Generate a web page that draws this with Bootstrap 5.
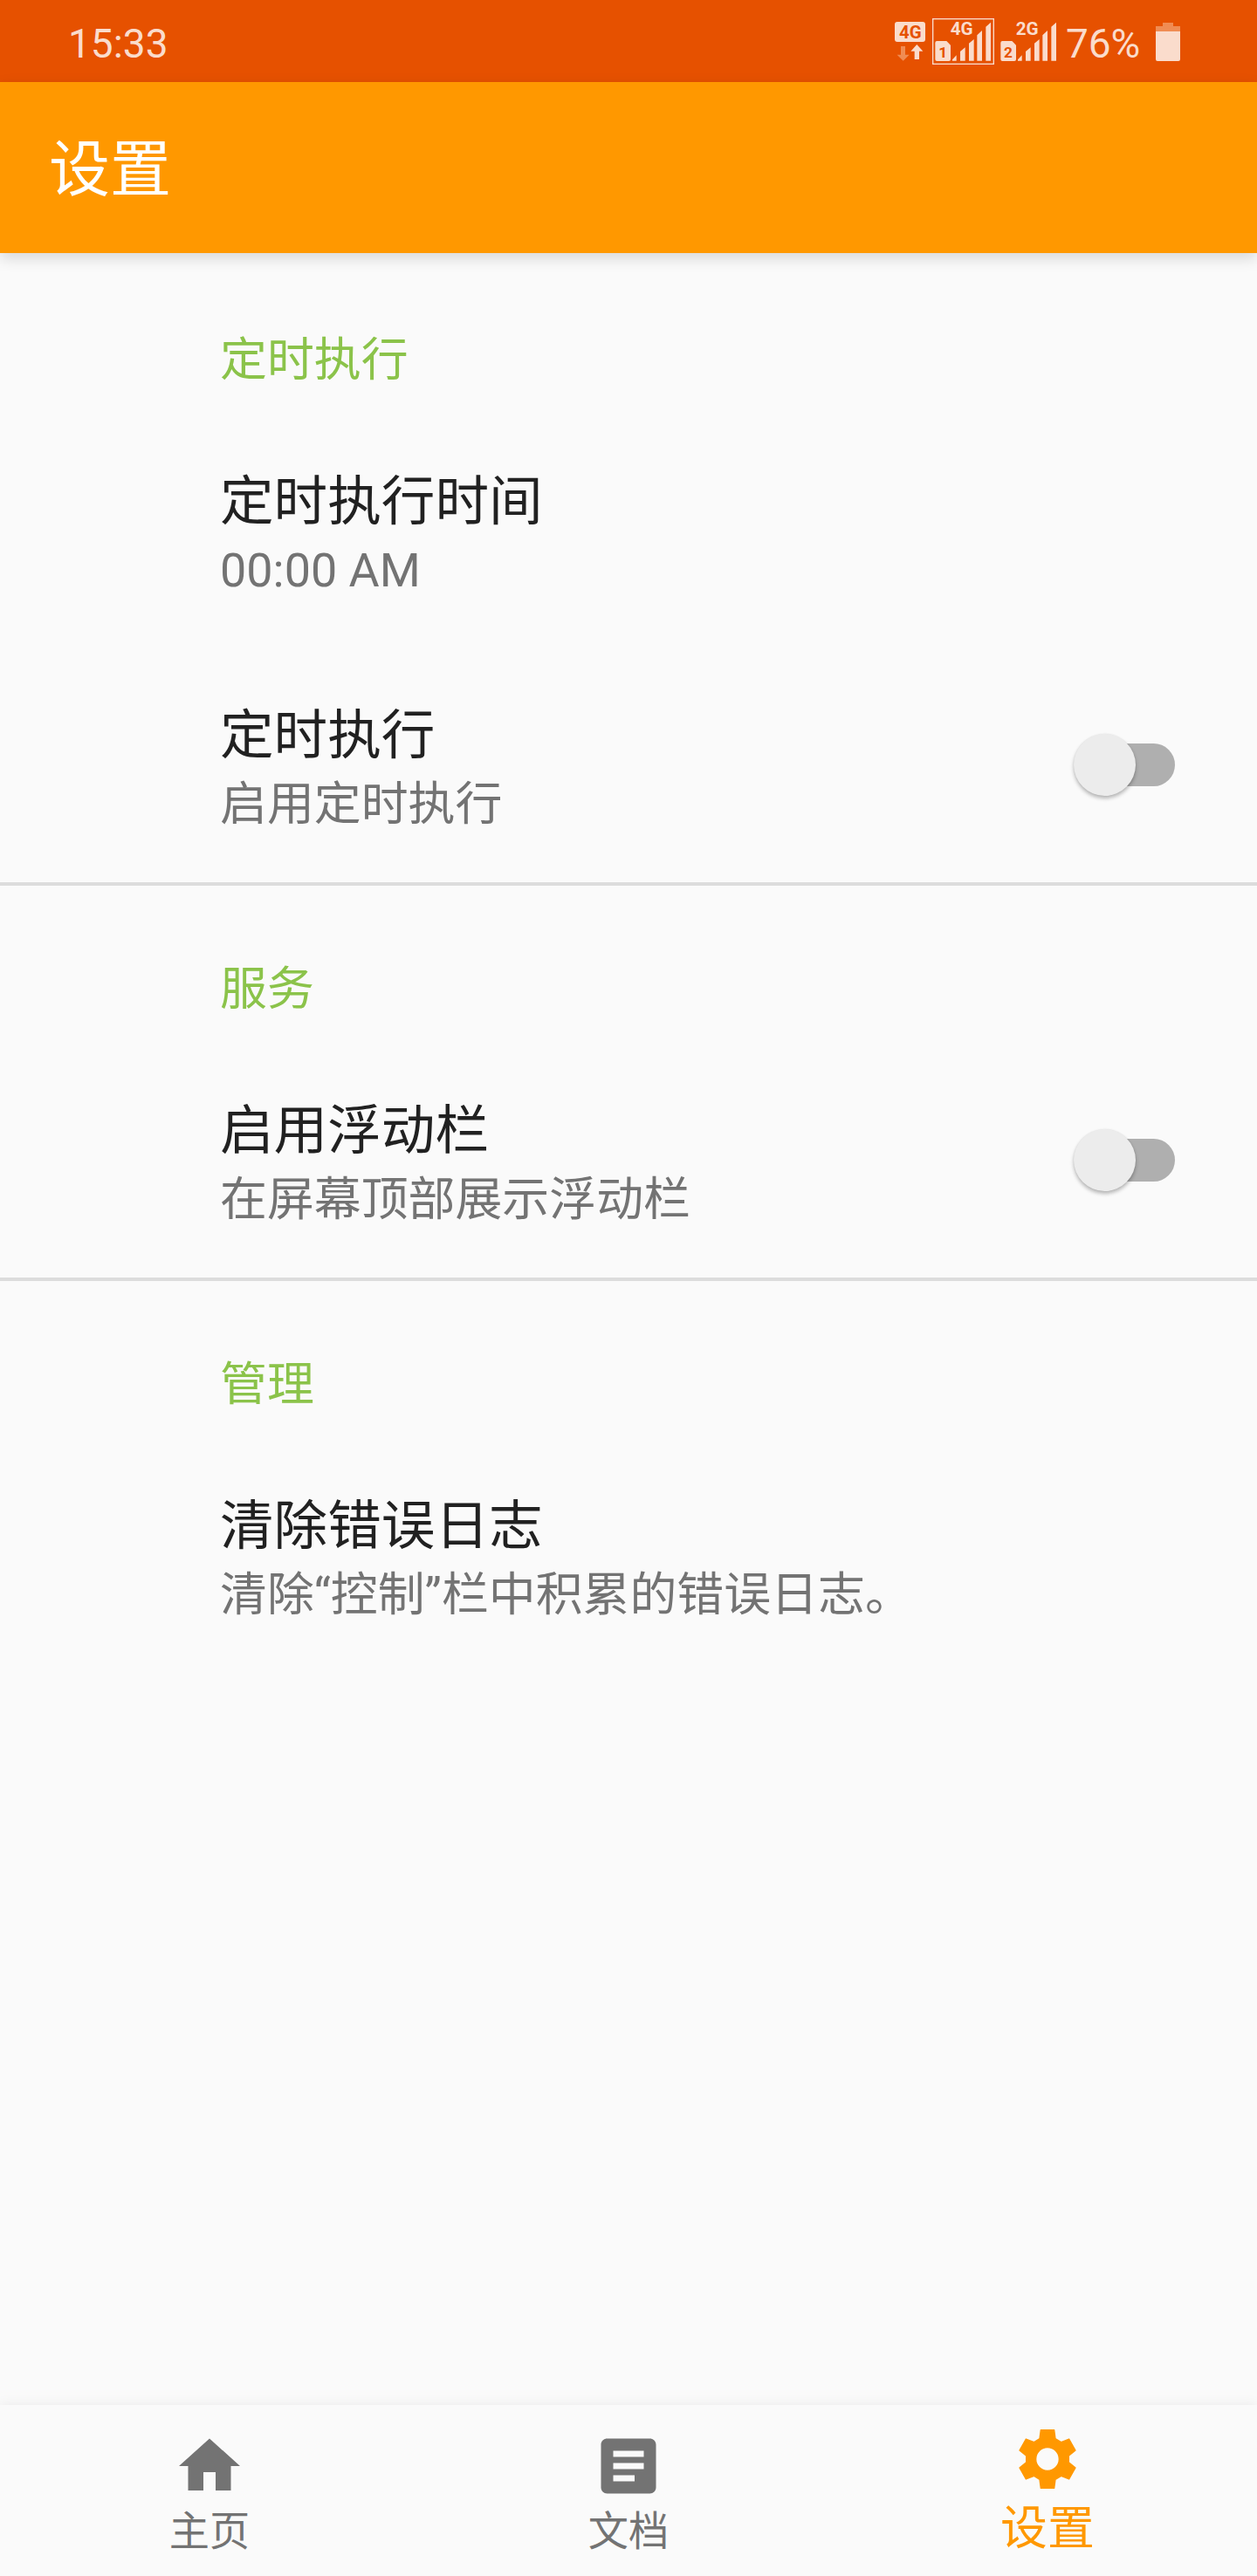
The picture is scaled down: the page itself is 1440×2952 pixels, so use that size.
<!DOCTYPE html>
<html lang="zh-CN">
<head>
<meta charset="utf-8">
<meta name="viewport" content="width=device-width, initial-scale=1">
<title>设置</title>
<link href="https://cdn.jsdelivr.net/npm/bootstrap@5.3.0/dist/css/bootstrap.min.css" rel="stylesheet">
<style>
  body { font-family: Roboto, "Noto Sans CJK SC", sans-serif; background: #fafafa; color: #212121; }
  .screen { width: 1440px; height: 2952px; }
  .status-bar { height: 94px; background: #e65100; color: #fadccc; font-size: 46px; line-height: 100px; padding: 0 80px 0 78px; }
  .status-icons { height: 94px; }
  .battery-level { margin: 0 13.7px 0 6px; }
  .app-bar { height: 196px; background: #ff9800; color: #fff; padding: 1px 56px 0; box-shadow: 0 6px 16px rgba(0,0,0,.14); z-index: 1; }
  .app-title { font-size: 70px; line-height: 200px; font-weight: 400; }
  .settings { padding-top: 4px; }
  .pref-group + .pref-group { border-top: 4px solid #dcdcdc; }
  .pref-heading { font-size: 53.9px; line-height: 64px; color: #8bc34a; font-weight: 400; padding: 87px 0 30px 252px; }
  .pref-item { height: 268px; padding: 0 94px 0 252px; }
  .pref-text { padding-top: 59px; }
  .pref-title { font-size: 61.6px; line-height: 82px; }
  .pref-summary { font-size: 53.9px; line-height: 74px; color: #737373; padding-top: 1px; }
  .toggle { width: 116px; height: 71px; border: 0; background: none; margin-bottom: 2px; }
  .toggle-track { height: 49px; width: 105px; border-radius: 25px; background: #afafaf; }
  .toggle-thumb { width: 71px; height: 71px; background: #ececec; margin-right: -60px; z-index: 1; box-shadow: 0 3px 4px rgba(0,0,0,.27), 0 0 2px rgba(0,0,0,.08); }
  .bottom-nav { height: 196px; background: #fafafa; box-shadow: 0 0 14px rgba(0,0,0,.07); color: #737373; }
  .bottom-nav svg { width: 84px; height: 84px; fill: currentColor; }
  .tab { padding-top: 28px; font-size: 46.2px; line-height: 60px; color: inherit; text-decoration: none; }
  .tab-label { margin-top: 3px; }
  .tab-active { padding-top: 20px; font-size: 53.9px; color: #ff9800; }
  .tab-active .tab-label { margin-top: 8px; }
</style>
</head>
<body>
<div class="screen d-flex flex-column overflow-hidden">
  <div class="status-bar d-flex justify-content-between flex-shrink-0">
    <div>15:33</div>
    <div class="d-flex">
      <svg class="status-icons" width="195" viewBox="30 0 585 282" fill="#fadccc" font-family="Roboto" font-weight="700">
        <rect x="45" y="75" width="105" height="69" rx="9"/>
        <text x="60" y="132" font-size="62" fill="#e65100" textLength="77" lengthAdjust="spacingAndGlyphs">4G</text>
        <path fill="#f08c53" d="M66 159h15v29h14l-21 21-21-21h13z"/>
        <path d="M121 153l21 23h-13v28h-16v-28h-13z"/>
        <rect x="176" y="65" width="209" height="155" fill="none" stroke="#fadccc" stroke-width="4"/>
        <text x="236" y="121" font-size="62" textLength="78" lengthAdjust="spacingAndGlyphs">4G</text>
        <path d="M190 141h33l14 14v49q0 6-6 6h-41q-6 0-6-6v-57q0-6 6-6z"/>
        <text x="196" y="197" font-size="52" fill="#e65100">1</text>
        <g id="bars"><path d="M243 209v-4l14-15v19zM270 209v-32l17-14v46zM300 209v-60l17-14v74zM328 209v-88l17-16v104zM358 209V92l17-15v132z"/></g>
        <text x="461" y="121" font-size="62" textLength="78" lengthAdjust="spacingAndGlyphs">2G</text>
        <path d="M415 141h33l14 14v49q0 6-6 6h-41q-6 0-6-6v-57q0-6 6-6z"/>
        <text x="420" y="197" font-size="52" fill="#e65100">2</text>
        <use href="#bars" x="225"/>
      </svg>
      <span class="battery-level">76%</span>
      <svg class="status-icons" width="40" viewBox="930 0 120 282">
        <path fill="#f08c53" d="M942 90h24V78h36v12h24v18h-84z"/>
        <path fill="#fadccc" d="M942 108h84v96q0 6-6 6h-72q-6 0-6-6z"/>
      </svg>
    </div>
  </div>
  <header class="app-bar position-relative flex-shrink-0">
    <h1 class="app-title m-0">设置</h1>
  </header>
  <main class="settings flex-grow-1">
    <section class="pref-group">
      <h2 class="pref-heading m-0">定时执行</h2>
      <div class="pref-item">
        <div class="pref-text"><div class="pref-title">定时执行时间</div><div class="pref-summary">00:00 AM</div></div>
      </div>
      <div class="pref-item d-flex justify-content-between">
        <div class="pref-text"><div class="pref-title">定时执行</div><div class="pref-summary">启用定时执行</div></div>
        <button class="toggle d-flex align-items-center p-0 align-self-center" role="switch" aria-checked="false"><span class="toggle-thumb rounded-circle flex-shrink-0"></span><span class="toggle-track flex-shrink-0"></span></button>
      </div>
    </section>
    <section class="pref-group">
      <h2 class="pref-heading m-0">服务</h2>
      <div class="pref-item d-flex justify-content-between">
        <div class="pref-text"><div class="pref-title">启用浮动栏</div><div class="pref-summary">在屏幕顶部展示浮动栏</div></div>
        <button class="toggle d-flex align-items-center p-0 align-self-center" role="switch" aria-checked="false"><span class="toggle-thumb rounded-circle flex-shrink-0"></span><span class="toggle-track flex-shrink-0"></span></button>
      </div>
    </section>
    <section class="pref-group">
      <h2 class="pref-heading m-0">管理</h2>
      <div class="pref-item">
        <div class="pref-text"><div class="pref-title">清除错误日志</div><div class="pref-summary">清除“控制”栏中积累的错误日志。</div></div>
      </div>
    </section>
  </main>
  <nav class="bottom-nav d-flex flex-shrink-0">
    <a class="tab d-flex flex-column align-items-center flex-fill w-100" href="#">
      <svg viewBox="0 0 24 24"><path d="M10 20v-6h4v6h5v-8h3L12 3 2 12h3v8z"/></svg>
      <span class="tab-label">主页</span>
    </a>
    <a class="tab d-flex flex-column align-items-center flex-fill w-100" href="#">
      <svg viewBox="0 0 24 24"><path d="M19 3H5c-1.100 0-2 .9-2 2v14c0 1.100.9 2 2 2h14c1.100 0 2-.9 2-2V5c0-1.100-.9-2-2-2zm-5 14H7v-2h7v2zm3-4H7v-2h10v2zm0-4H7V7h10v2z"/></svg>
      <span class="tab-label">文档</span>
    </a>
    <a class="tab tab-active d-flex flex-column align-items-center flex-fill w-100" href="#" aria-current="page">
      <svg viewBox="234 138 252 252"><path fill-rule="evenodd" stroke="currentColor" stroke-width="4" stroke-linejoin="round" d="M337 164H383L387 194 407 206 434 195 456 234 433 253V275L456 294 434 333 407 322 387 334 383 364H337L333 334 314 322 286 333 264 294 287 275V253L264 234 286 195 314 206 333 194zM360 224a40 40 0 1 0 0 80a40 40 0 1 0 0-80z"/></svg>
      <span class="tab-label">设置</span>
    </a>
  </nav>
</div>
<script src="https://cdn.jsdelivr.net/npm/bootstrap@5.3.0/dist/js/bootstrap.bundle.min.js"></script>
</body>
</html>
